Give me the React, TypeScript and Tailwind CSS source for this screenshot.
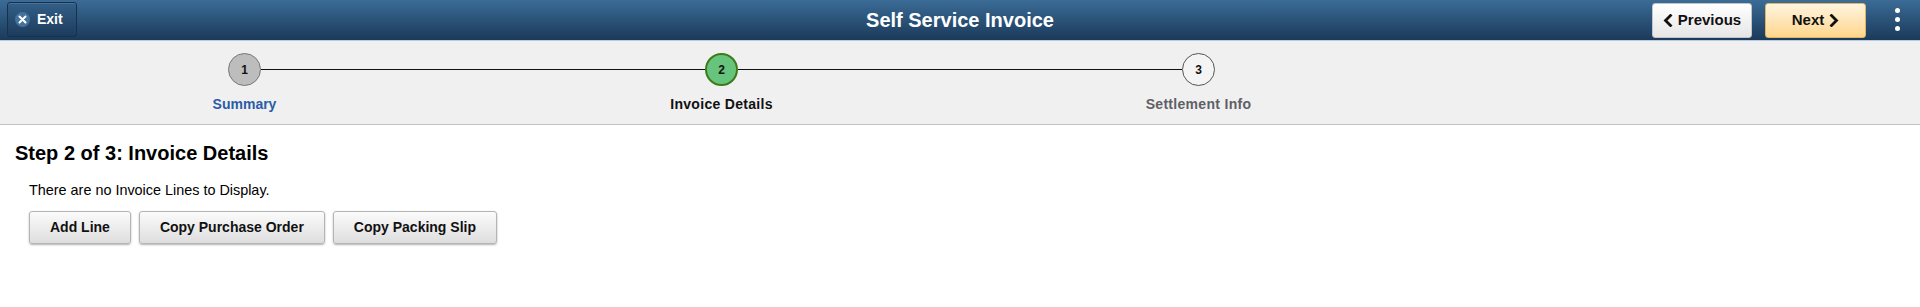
import React from "react";

const font = { fontFamily: '"Liberation Sans", Arial, sans-serif' };

function ChevronLeft() {
  return (
    <svg width="10" height="13" viewBox="0 0 10 13" className="shrink-0">
      <polyline points="7.5,1.5 2.5,6.5 7.5,11.5" fill="none" stroke="#111" strokeWidth="2.8" strokeLinecap="square" />
    </svg>
  );
}

function ChevronRight() {
  return (
    <svg width="10" height="13" viewBox="0 0 10 13" className="shrink-0">
      <polyline points="2.5,1.5 7.5,6.5 2.5,11.5" fill="none" stroke="#111" strokeWidth="2.8" strokeLinecap="square" />
    </svg>
  );
}

const steps = [
  {
    n: 1,
    label: "Summary",
    circle: "bg-[#bdbdbd] border border-[#777]",
    text: "text-[#2a5ca8]",
  },
  {
    n: 2,
    label: "Invoice Details",
    circle: "bg-[#66c47c] border-2 border-[#3f7a18]",
    text: "text-[#111] tracking-[0.3px]",
  },
  {
    n: 3,
    label: "Settlement Info",
    circle: "bg-[#f4f4f4] border border-[#555]",
    text: "text-[#5f5f66] tracking-[0.3px]",
  },
];

export default function App() {
  return (
    <div className="w-[1920px] h-[307px] bg-white" style={font}>
      {/* Header */}
      <div className="grid grid-cols-[1fr_auto_1fr] h-[41px] bg-gradient-to-b from-[#3b6c97] to-[#1b3a5a] border-b border-[#b8cde0]">
        <div className="flex items-start pt-[2px] pl-[7px]">
          <button className="flex items-center h-[35px] pl-[7px] pr-[13px] gap-[7px] rounded-[3px] border border-[#17304b] bg-gradient-to-b from-[#335f88] to-[#1d3c5c] shadow-[inset_0_1px_0_rgba(255,255,255,0.12)]">
            <span className="flex items-center justify-center w-[15px] h-[15px] rounded-full bg-[#44729c]">
              <svg width="9" height="9" viewBox="0 0 9 9">
                <path d="M1.5 1.5 L7.5 7.5 M7.5 1.5 L1.5 7.5" stroke="#fff" strokeWidth="2" strokeLinecap="round" />
              </svg>
            </span>
            <span className="text-[14px] font-bold text-white">Exit</span>
          </button>
        </div>
        <div className="flex items-center justify-center pb-[1px]">
          <h1 className="text-[20px] font-bold text-white">Self Service Invoice</h1>
        </div>
        <div className="flex items-start justify-end pt-[3px] pr-[20px]">
          <button className="flex items-center justify-center gap-[5px] w-[100px] h-[35px] rounded-[3px] border border-[#c4c4c4] bg-gradient-to-b from-white to-[#e6e6e6]">
            <ChevronLeft />
            <span className="text-[15px] font-bold text-[#111]">Previous</span>
          </button>
          <button className="ml-[13px] flex items-center justify-center gap-[5px] w-[101px] h-[35px] rounded-[3px] border border-[#e3b561] bg-gradient-to-b from-[#fff4dd] to-[#ffd68c]">
            <span className="text-[15px] font-bold text-[#111]">Next</span>
            <ChevronRight />
          </button>
          <div className="ml-[29px] flex flex-col items-center gap-[4px] pt-[5px]">
            <span className="w-[5px] h-[5px] rounded-full bg-white" />
            <span className="w-[5px] h-[5px] rounded-full bg-white" />
            <span className="w-[5px] h-[5px] rounded-full bg-white" />
          </div>
        </div>
      </div>

      {/* Train stops */}
      <div className="h-[84px] bg-[#f0f0f0] border-b border-[#c2c2c2] pt-[12px] pl-[6px] flex">
        {steps.map((s, i) => (
          <div key={s.n} className="w-[477px] flex flex-col items-center">
            <div className="w-full flex items-center h-[33px]">
              <div className={`flex-1 h-[1px] ${i === 0 ? "" : "bg-[#111]"}`} />
              <div className={`w-[33px] h-[33px] rounded-full flex items-center justify-center ${s.circle}`}>
                <span className="text-[12px] font-bold text-[#111]">{s.n}</span>
              </div>
              <div className={`flex-1 h-[1px] ${i === steps.length - 1 ? "" : "bg-[#111]"}`} />
            </div>
            <div className={`mt-[10px] text-[14px] leading-[16px] font-bold ${s.text}`}>{s.label}</div>
          </div>
        ))}
      </div>

      {/* Content */}
      <div className="pt-[16px] pl-[15px]">
        <h2 className="text-[20px] leading-[24px] font-bold text-black">Step 2 of 3: Invoice Details</h2>
        <div className="pl-[14px]">
          <p className="mt-[17px] text-[14.4px] leading-[16px] text-black">There are no Invoice Lines to Display.</p>
          <div className="mt-[13px] flex gap-[8px]">
            {["Add Line", "Copy Purchase Order", "Copy Packing Slip"].map((b) => (
              <button
                key={b}
                className="h-[33px] px-[20px] rounded-[3px] border border-[#b4b4b4] bg-gradient-to-b from-[#fbfbfb] to-[#dedede] shadow-[0_1px_2px_rgba(0,0,0,0.3)] text-[14px] font-bold text-[#111]"
              >
                {b}
              </button>
            ))}
          </div>
        </div>
      </div>
    </div>
  );
}
